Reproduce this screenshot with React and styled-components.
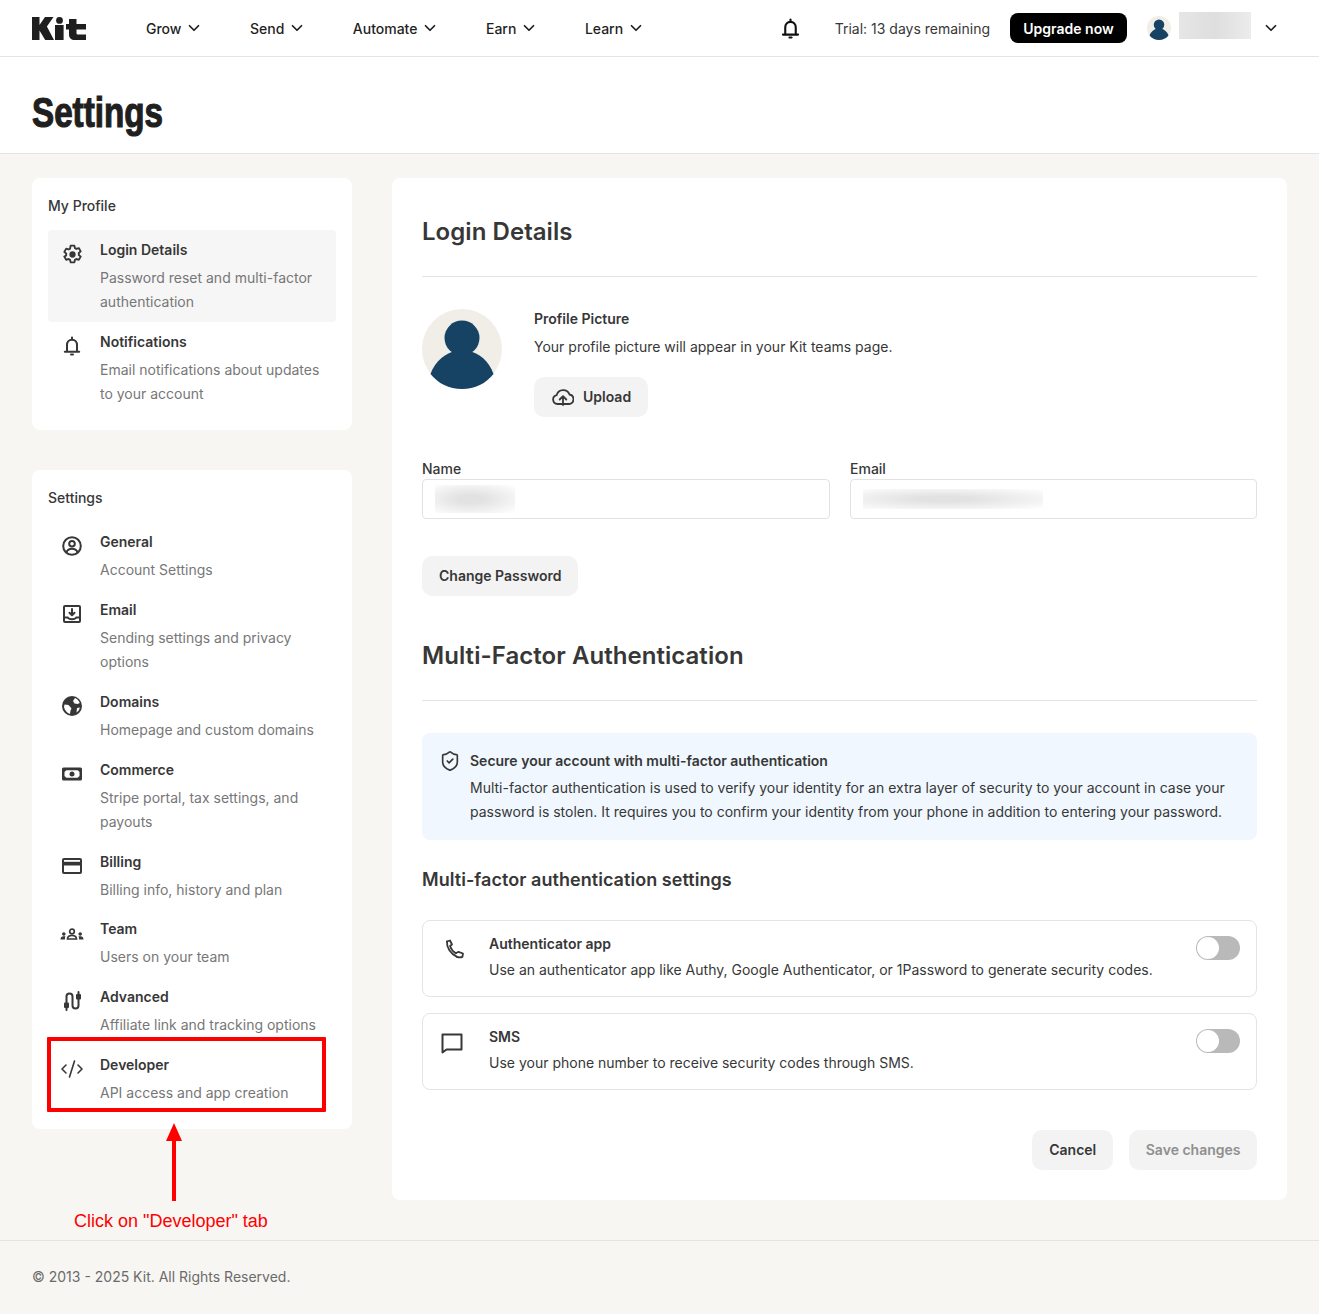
import React from 'react';
import styled, { createGlobalStyle } from 'styled-components';
import { ChevronDown, CodeXml, ShieldCheck } from 'lucide-react';

const GlobalStyle = createGlobalStyle`
  * { box-sizing: border-box; }
  body {
    margin: 0;
    background: #f7f6f3;
    font-family: Inter, "Liberation Sans", sans-serif;
    font-size: 14px;
    color: #373737;
  }
`;

function KitLogo() {
  return (
    <svg width="54" height="23" viewBox="0 0 54 23" fill="#1f1f1f">
      <path d="M0 0h7.5v8L13 0h8.5l-6.6 9.6L22 23h-8.8L7.5 13.5V23H0z" />
      <circle cx="27.5" cy="3.4" r="3.4" />
      <rect x="23" y="8" width="8.6" height="15" />
      <path d="M37 2h7.5v5H54v5.500h-9.500v3.500c0 1 .6 1.500 1.600 1.500H54V23h-11c-4 0-6-2-6-5.500v-5h-3V7h3z" />
    </svg>
  );
}

function PersonIcon({ size }) {
  return (
    <svg width={size} height={size} viewBox="0 0 80 80">
      <circle cx="40" cy="40" r="40" fill="#f1eee8" />
      <circle cx="40" cy="29" r="17.500" fill="#164263" />
      <path d="M8.500 65C13 52 25 43 33 42.500h14C56 43 67 52 71.500 65 64 74.500 53 80 40 80S16 74.500 8.500 65z" fill="#164263" />
    </svg>
  );
}

const stroke = { fill: 'none', stroke: 'currentColor', strokeWidth: 2, strokeLinecap: 'round', strokeLinejoin: 'round' };

function GearIcon() {
  return (
    <svg width="21" height="21" viewBox="0 0 20 20">
      <path {...stroke} strokeWidth="1.800" d="M8.200 1.500h3.600l.5 2.400 1.400.8 2.300-.8 1.800 3.100-1.800 1.600v1.800l1.800 1.600-1.800 3.100-2.300-.8-1.400.8-.5 2.400H8.200l-.5-2.400-1.400-.8-2.300.8-1.800-3.100L4 10.900V9.100L2.200 7.500 4 4.400l2.300.8 1.400-.8z" />
      <circle cx="10" cy="10" r="3" fill="currentColor" />
    </svg>
  );
}

function OutlineBell({ size = 20 }) {
  return (
    <svg width={size} height={size} viewBox="0 0 20 20">
      <path {...stroke} d="M5 15.500V9c0-3 2-5.300 5-5.300s5 2.300 5 5.300v6.500M2.800 15.800h14.400" />
      <path {...stroke} d="M10 1.500v1.500M9 18.600h2" />
    </svg>
  );
}

function ProfileCircleIcon() {
  return (
    <svg width="20" height="20" viewBox="0 0 20 20">
      <circle {...stroke} cx="10" cy="10" r="8.800" />
      <circle {...stroke} cx="10" cy="7.800" r="2.800" />
      <path {...stroke} d="M4.500 16c1-2.300 3-3.300 5.500-3.300s4.500 1 5.500 3.300" />
    </svg>
  );
}

function InboxIcon() {
  return (
    <svg width="20" height="20" viewBox="0 0 20 20">
      <rect {...stroke} x="2" y="2" width="16" height="16" rx="1" />
      <path {...stroke} d="M10 5v6M7.500 8.700l2.500 2.500 2.500-2.500M2 13.500h3.800c.5 1.300 2.200 1.800 4.200 1.800s3.700-.5 4.200-1.800H18" />
    </svg>
  );
}

function GlobeIcon() {
  return (
    <svg width="20" height="20" viewBox="0 0 20 20">
      <circle cx="10" cy="10" r="10" fill="currentColor" />
      <path fill="#fff" d="M2.500 8.500l4 .5 2 2.200 1 1.300-1 2-.5 3.500C5 17 2.500 14 2 11zM13 2l-2 3 1.500 2.500 3 .5 2.300-1C16.800 4.500 15 2.800 13 2zM15 12l2.800-.5c-.3 2-1.500 4-3.300 5z" />
    </svg>
  );
}

function CashIcon() {
  return (
    <svg width="20" height="20" viewBox="0 0 20 20">
      <rect x="0" y="3.500" width="20" height="13" rx="1.500" fill="currentColor" />
      <path fill="#fff" d="M4.300 6.300h11.400l1.800 1.800v3.800l-1.800 1.800H4.300l-1.800-1.800V8.100z" />
      <circle cx="10" cy="10" r="2.500" fill="currentColor" />
    </svg>
  );
}

function CardIcon() {
  return (
    <svg width="20" height="20" viewBox="0 0 20 20">
      <rect x="0" y="2" width="20" height="16" rx="2" fill="currentColor" />
      <rect x="2" y="4" width="16" height="1.800" fill="#fff" />
      <rect x="2" y="9.500" width="16" height="6.500" fill="#fff" />
    </svg>
  );
}

function TeamIcon() {
  return (
    <svg width="24" height="20" viewBox="0 0 24 20" fill="currentColor">
      <circle cx="12" cy="8.500" r="2.300" fill="none" stroke="currentColor" strokeWidth="1.700" />
      <path d="M7.500 16c0-2.500 2-3.500 4.500-3.500s4.500 1 4.500 3.500z" fill="none" stroke="currentColor" strokeWidth="1.700" />
      <circle cx="3.800" cy="11" r="1.800" />
      <path d="M0.500 16.500c0-2 1.300-3.200 3-3.200h2c-.5 1-.6 2.200-.6 3.200z" />
      <circle cx="20.200" cy="11" r="1.800" />
      <path d="M23.500 16.500c0-2-1.300-3.200-3-3.200h-2c.5 1 .6 2.200.6 3.200z" />
    </svg>
  );
}

function CableIcon() {
  return (
    <svg width="20" height="20" viewBox="0 0 20 20">
      <path {...stroke} d="M4.500 13V5.500a3 3 0 0 1 6 0v9a3 3 0 0 0 6 0V7" />
      <rect x="2" y="11.500" width="5" height="5.500" rx="1" fill="currentColor" />
      <path {...stroke} d="M4.500 17v2" />
      <rect x="14" y="3" width="5" height="5.500" rx="1" fill="currentColor" />
      <path {...stroke} d="M16.500 1v2" />
    </svg>
  );
}

function CloudIcon() {
  return (
    <svg width="22" height="22" viewBox="1 1 22 22">
      <path {...stroke} strokeWidth="1.800" d="M6.500 19a4.500 4.500 0 0 1-.8-8.900 6.700 6.700 0 0 1 12.800-.6 4.800 4.800 0 0 1-.3 9.500z" />
      <path {...stroke} strokeWidth="1.800" d="M12 20v-8.500M8.700 14.500l3.300-3.300 3.300 3.300" />
    </svg>
  );
}

function PhoneIcon() {
  return (
    <svg width="24" height="20" viewBox="0 0 24 20">
      <path {...stroke} strokeWidth="1.800" d="M6 2.500l3-1 2 4-2 1.500c1 3 3 5.500 5.800 7.200" />
      <path {...stroke} strokeWidth="1.800" d="M6 2.500c-.5 6 3.500 12.500 10 15.300" />
      <path {...stroke} strokeWidth="1.800" d="M14.800 14.200l2.700-1.400 4.500 1.700-.6 3.300c-1.500.6-3.800.6-5.400 0" />
    </svg>
  );
}

function SmsIcon() {
  return (
    <svg width="22" height="22" viewBox="0 0 22 22">
      <path {...stroke} strokeWidth="2" d="M1.500 2.500h19v15H5.500l-4 3z" />
    </svg>
  );
}

const myProfile = [
  { icon: <GearIcon />, title: 'Login Details', lines: ['Password reset and multi-factor', 'authentication'], active: true },
  { icon: <OutlineBell />, title: 'Notifications', lines: ['Email notifications about updates', 'to your account'] },
];

const settings = [
  { icon: <ProfileCircleIcon />, title: 'General', lines: ['Account Settings'] },
  { icon: <InboxIcon />, title: 'Email', lines: ['Sending settings and privacy', 'options'] },
  { icon: <GlobeIcon />, title: 'Domains', lines: ['Homepage and custom domains'] },
  { icon: <CashIcon />, title: 'Commerce', lines: ['Stripe portal, tax settings, and', 'payouts'] },
  { icon: <CardIcon />, title: 'Billing', lines: ['Billing info, history and plan'], tight: true },
  { icon: <TeamIcon />, title: 'Team', lines: ['Users on your team'] },
  { icon: <CableIcon />, title: 'Advanced', lines: ['Affiliate link and tracking options'] },
  { icon: <CodeXml size={24} strokeWidth={1.600} />, title: 'Developer', lines: ['API access and app creation'] },
];

function App() {
  return (
    <>
      <GlobalStyle />
      <TopBar>
        <KitLogo />
        <Nav>
          {['Grow', 'Send', 'Automate', 'Earn', 'Learn'].map((label) => (
            <NavItem key={label}>
              {label}
              <ChevronDown size={18} strokeWidth={2.300} />
            </NavItem>
          ))}
        </Nav>
        <TopRight>
          <BellWrap><OutlineBell size={21} /></BellWrap>
          <Trial>Trial: 13 days remaining</Trial>
          <UpgradeButton>Upgrade now</UpgradeButton>
          <Account>
            <PersonIcon size={24} />
            <AccountBlur />
            <ChevronDown size={18} strokeWidth={2.300} />
          </Account>
        </TopRight>
      </TopBar>

      <TitleBand>
        <PageTitle>Settings</PageTitle>
      </TitleBand>

      <Body>
        <Sidebar>
          <SideCard>
            <SideHeading>My Profile</SideHeading>
            {myProfile.map((item) => <SideItem key={item.title} {...item} />)}
          </SideCard>
          <SideCard>
            <SideHeading>Settings</SideHeading>
            {settings.map((item) => <SideItem key={item.title} {...item} />)}
          </SideCard>
        </Sidebar>

        <Main>
          <SectionHeading>Login Details</SectionHeading>
          <Picture>
            <PersonIcon size={80} />
            <div>
              <Strong>Profile Picture</Strong>
              <PictureText>Your profile picture will appear in your Kit teams page.</PictureText>
              <UploadButton>
                <CloudIcon />
                Upload
              </UploadButton>
            </div>
          </Picture>

          <Fields>
            <Field>
              <FieldLabel>Name</FieldLabel>
              <FieldBox><BlurText $width={80} $height={28} /></FieldBox>
            </Field>
            <Field>
              <FieldLabel>Email</FieldLabel>
              <FieldBox><BlurText $width={180} $height={20} /></FieldBox>
            </Field>
          </Fields>

          <PasswordRow>
            <GreyButton>Change Password</GreyButton>
          </PasswordRow>

          <SectionHeading>Multi-Factor Authentication</SectionHeading>

          <Notice>
            <NoticeIcon><ShieldCheck size={22} strokeWidth={1.800} /></NoticeIcon>
            <div>
              <Strong>Secure your account with multi-factor authentication</Strong>
              <NoticeText>
                Multi-factor authentication is used to verify your identity for an extra layer of security to your account in case your
                password is stolen. It requires you to confirm your identity from your phone in addition to entering your password.
              </NoticeText>
            </div>
          </Notice>

          <SubHeading>Multi-factor authentication settings</SubHeading>

          <OptionCard>
            <OptionIcon><PhoneIcon /></OptionIcon>
            <OptionBody>
              <Strong>Authenticator app</Strong>
              <OptionText>Use an authenticator app like Authy, Google Authenticator, or 1Password to generate security codes.</OptionText>
            </OptionBody>
            <Toggle />
          </OptionCard>
          <OptionCard>
            <OptionIcon><SmsIcon /></OptionIcon>
            <OptionBody>
              <Strong>SMS</Strong>
              <OptionText>Use your phone number to receive security codes through SMS.</OptionText>
            </OptionBody>
            <Toggle />
          </OptionCard>

          <Actions>
            <GreyButton>Cancel</GreyButton>
            <GreyButton $disabled>Save changes</GreyButton>
          </Actions>
        </Main>
      </Body>

      <Footer>© 2013 - 2025 Kit. All Rights Reserved.</Footer>

      {/* Red annotation drawn over the screenshot */}
      <Callout />
      <CalloutArrow width="16" height="80" viewBox="0 0 16 80">
        <path d="M8 0L16 18H10V78H6V18H0z" fill="#ff0000" />
      </CalloutArrow>
      <CalloutText>Click on "Developer" tab</CalloutText>
    </>
  );
}

function SideItem({ icon, title, lines, active, tight }) {
  return (
    <ItemRow $active={active} $tight={tight}>
      <ItemIcon>{icon}</ItemIcon>
      <div>
        <ItemTitle>{title}</ItemTitle>
        <ItemText>
          {lines.map((line) => <span key={line}>{line}</span>)}
        </ItemText>
      </div>
    </ItemRow>
  );
}

const TopBar = styled.header`
  height: 57px;
  background: #fff;
  border-bottom: 1px solid #e4e4e4;
  padding: 0 39px 0 32px;
  display: flex;
  align-items: center;
`;

const Nav = styled.nav`
  display: flex;
  gap: 46.500px;
  margin-left: 60px;
`;

const NavItem = styled.div`
  display: flex;
  align-items: center;
  gap: 4px;
  font-size: 14px;
  font-weight: 500;
  color: #1f1f1f;
`;

const TopRight = styled.div`
  margin-left: auto;
  display: flex;
  align-items: center;
`;

const BellWrap = styled.span`
  display: flex;
  color: #111;
  margin-right: 34px;
`;

const Trial = styled.span`
  color: #373737;
  margin-right: 20px;
`;

const UpgradeButton = styled.div`
  background: #000;
  color: #fff;
  height: 30px;
  width: 117px;
  border-radius: 8px;
  font-weight: 600;
  display: flex;
  align-items: center;
  justify-content: center;
  margin-right: 20px;
`;

const Account = styled.div`
  display: flex;
  align-items: center;
  color: #1f1f1f;
  svg:last-child { margin-left: 11px; }
`;

const AccountBlur = styled.div`
  width: 72px;
  height: 27px;
  margin: -5px 0 0 8px;
  background: linear-gradient(90deg, #e6e6e6, #dedede 50%, #ececec);
`;

const TitleBand = styled.div`
  height: 97px;
  background: #fff;
  border-bottom: 1px solid #e4e4e4;
  padding: 16px 32px 0;
  display: flex;
  align-items: center;
`;

const PageTitle = styled.h1`
  margin: 0;
  font-family: "Liberation Sans", sans-serif;
  font-size: 42px;
  font-weight: 700;
  color: #1f1f1f;
  -webkit-text-stroke: 1.200px #1f1f1f;
  transform: scaleX(0.79);
  transform-origin: left center;
`;

const Body = styled.div`
  display: flex;
  align-items: flex-start;
  gap: 40px;
  padding: 24px 32px 40px;
`;

const Sidebar = styled.aside`
  width: 320px;
  flex: none;
  display: flex;
  flex-direction: column;
  gap: 40px;
`;

const SideCard = styled.section`
  background: #fff;
  border-radius: 8px;
  padding: 18px 16px 16px;
`;

const SideHeading = styled.div`
  font-weight: 500;
  line-height: 20px;
  margin-bottom: 14px;
`;

const ItemRow = styled.div`
  display: flex;
  gap: 18px;
  padding: 10px 14px ${(p) => (p.$tight ? '7px' : '8px')} 14px;
  border-radius: 4px;
  background: ${(p) => (p.$active ? '#f6f6f6' : 'transparent')};
`;

const ItemIcon = styled.div`
  width: 20px;
  height: 28px;
  flex: none;
  display: flex;
  align-items: center;
  justify-content: center;
  color: #373737;
  svg { flex: none; }
`;

const ItemTitle = styled.div`
  font-weight: 600;
  line-height: 20px;
  margin-bottom: 6px;
`;

const ItemText = styled.div`
  color: #777;
  line-height: 24px;
  span { display: block; white-space: nowrap; }
`;

const Main = styled.main`
  flex: 1;
  background: #fff;
  border-radius: 8px;
  padding: 30px 30px 30px;
`;

const SectionHeading = styled.h2`
  margin: 0;
  height: 69px;
  border-bottom: 1px solid #e4e4e4;
  font-size: 24px;
  font-weight: 600;
  letter-spacing: 0.05px;
  line-height: 48px;
  color: #373737;
`;

const Picture = styled.div`
  display: flex;
  gap: 32px;
  margin-top: 32px;
`;

const Strong = styled.div`
  font-weight: 600;
  line-height: 20px;
  color: #373737;
`;

const PictureText = styled.div`
  line-height: 24px;
  margin: 6px 0 18px;
`;

const GreyButton = styled.div`
  display: inline-flex;
  align-items: center;
  gap: 8px;
  height: 40px;
  padding: 0 ${(p) => (p.$disabled ? '16.500px' : '17px')} 1px;
  border-radius: 10px;
  background: #f3f3f3;
  font-weight: 600;
  color: ${(p) => (p.$disabled ? '#8f8f8f' : '#373737')};
`;

const UploadButton = styled(GreyButton)`
  gap: 9px;
  padding: 0 17px 1px 18px;
`;

const Fields = styled.div`
  display: grid;
  grid-template-columns: 408px 407px;
  gap: 20px;
  margin-top: 44px;
`;

const Field = styled.div``;

const FieldLabel = styled.div`
  font-weight: 500;
  line-height: 16px;
  margin-bottom: 2px;
`;

const FieldBox = styled.div`
  height: 40px;
  border: 1px solid #e2e2e2;
  border-radius: 4px;
  padding: 0 12px;
  display: flex;
  align-items: center;
  overflow: hidden;
`;

const BlurText = styled.div`
  width: ${(p) => p.$width}px;
  height: ${(p) => p.$height}px;
  background: radial-gradient(ellipse at 45% 50%, #e2e2e2 20%, #f2f2f2 65%, #fff 100%);
`;

const PasswordRow = styled.div`
  margin: 37px 0 36px;
`;

const Notice = styled.div`
  display: flex;
  gap: 10px;
  margin-top: 32px;
  padding: 18px 20px 16px 18px;
  border-radius: 8px;
  background: #f0f7fe;
`;

const NoticeIcon = styled.div`
  width: 20px;
  height: 20px;
  flex: none;
  color: #373737;
  svg { display: block; margin: -1px; }
`;

const NoticeText = styled.div`
  line-height: 24px;
  margin-top: 5px;
`;

const SubHeading = styled.h3`
  margin: 26px 0 26px;
  font-size: 18px;
  font-weight: 600;
  letter-spacing: 0.05px;
  line-height: 28px;
`;

const OptionCard = styled.div`
  display: flex;
  height: 77px;
  margin-bottom: 16px;
  padding: 13px 16px 0 18px;
  border: 1px solid #e4e4e4;
  border-radius: 8px;
`;

const OptionIcon = styled.div`
  width: 24px;
  flex: none;
  margin: 5px 24px 0 0;
  display: flex;
  align-items: flex-start;
  color: #373737;
`;

const OptionBody = styled.div`
  flex: 1;
`;

const OptionText = styled.div`
  margin-top: 4px;
  line-height: 24px;
`;

const Toggle = styled.div`
  width: 44px;
  height: 24px;
  margin-top: 2px;
  border-radius: 12px;
  background: #b9b9b9;
  position: relative;
  &::after {
    content: '';
    position: absolute;
    left: 1px;
    top: 1px;
    width: 22px;
    height: 22px;
    border-radius: 50%;
    background: #fff;
  }
`;

const Actions = styled.div`
  display: flex;
  justify-content: flex-end;
  gap: 16px;
  margin-top: 40px;
`;

const Footer = styled.footer`
  border-top: 1px solid #e4e4e4;
  height: 74px;
  padding: 0 32px 2px;
  display: flex;
  align-items: center;
  color: #6b6b6b;
`;

const Callout = styled.div`
  position: absolute;
  left: 47px;
  top: 1037px;
  width: 279px;
  height: 75px;
  border: 4px solid #ff0000;
  border-radius: 1px;
`;

const CalloutArrow = styled.svg`
  position: absolute;
  left: 166px;
  top: 1123px;
`;

const CalloutText = styled.div`
  position: absolute;
  left: 74px;
  top: 1210px;
  font-family: "Liberation Sans", sans-serif;
  font-size: 18px;
  line-height: 22px;
  color: #ff0000;
`;

export default App;
